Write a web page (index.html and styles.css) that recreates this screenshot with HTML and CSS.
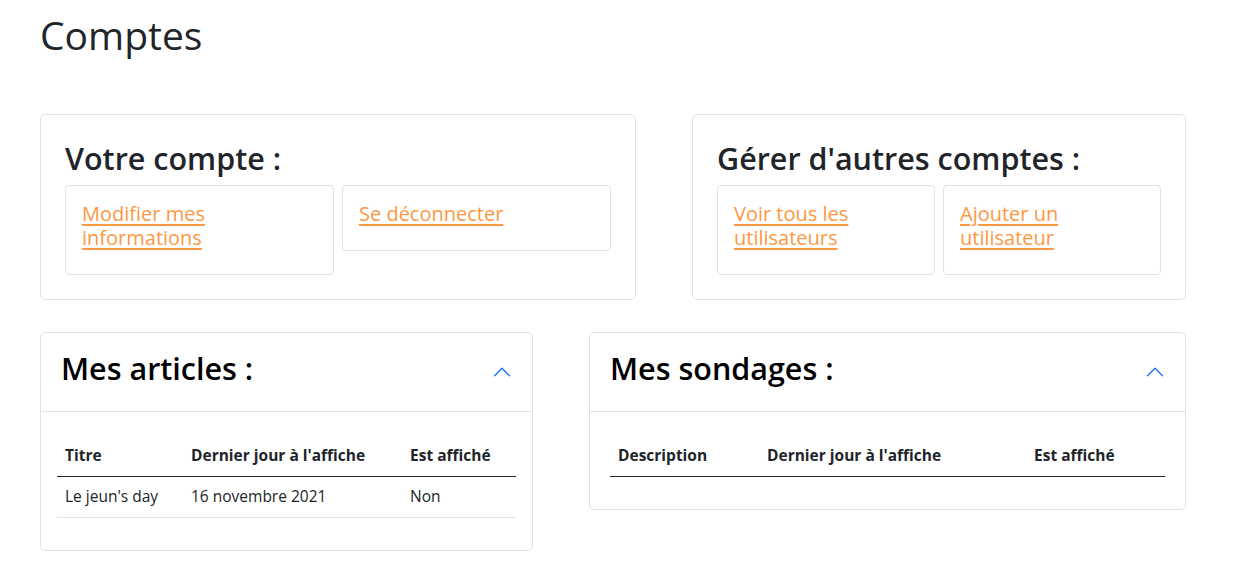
FILE: index.html
```html
<!DOCTYPE html>
<html lang="fr">
<head>
<meta charset="utf-8">
<title>Comptes</title>
<link rel="stylesheet" href="styles.css">
</head>
<body>
<main class="page">
  <h1 class="page-title">Comptes</h1>

  <section class="row row-top">
    <div class="card">
      <h2 class="card-title">Votre compte :</h2>
      <div class="link-grid">
        <div class="link-card"><h5 class="link-title"><a href="#">Modifier mes informations</a></h5></div>
        <div class="link-card"><h5 class="link-title"><a href="#">Se déconnecter</a></h5></div>
      </div>
    </div>
    <div class="card">
      <h2 class="card-title">Gérer d'autres comptes :</h2>
      <div class="link-grid">
        <div class="link-card"><h5 class="link-title"><a href="#">Voir tous les utilisateurs</a></h5></div>
        <div class="link-card"><h5 class="link-title"><a href="#">Ajouter un utilisateur</a></h5></div>
      </div>
    </div>
  </section>

  <section class="row row-bottom">
    <div class="accordion">
      <div class="acc-header">
        <h2 class="acc-title">Mes articles :</h2>
        <svg class="chevron" viewBox="0 0 16 16" width="20" height="20"><path fill="currentColor" fill-rule="evenodd" d="M1.646 11.354a.5.5 0 0 0 .708 0L8 5.707l5.646 5.647a.5.5 0 0 0 .708-.708l-6-6a.5.5 0 0 0-.708 0l-6 6a.5.5 0 0 0 0 .708z"/></svg>
      </div>
      <div class="acc-body acc-body-narrow">
        <table class="table table-articles">
          <thead>
            <tr><th class="c1">Titre</th><th class="c2">Dernier jour à l'affiche</th><th>Est affiché</th></tr>
          </thead>
          <tbody>
            <tr><td>Le jeun's day</td><td>16 novembre 2021</td><td>Non</td></tr>
          </tbody>
        </table>
      </div>
    </div>
    <div class="accordion">
      <div class="acc-header">
        <h2 class="acc-title">Mes sondages :</h2>
        <svg class="chevron" viewBox="0 0 16 16" width="20" height="20"><path fill="currentColor" fill-rule="evenodd" d="M1.646 11.354a.5.5 0 0 0 .708 0L8 5.707l5.646 5.647a.5.5 0 0 0 .708-.708l-6-6a.5.5 0 0 0-.708 0l-6 6a.5.5 0 0 0 0 .708z"/></svg>
      </div>
      <div class="acc-body">
        <table class="table table-sondages">
          <thead>
            <tr><th class="c1">Description</th><th class="c2">Dernier jour à l'affiche</th><th>Est affiché</th></tr>
          </thead>
          <tbody></tbody>
        </table>
      </div>
    </div>
  </section>
</main>
</body>
</html>
```

FILE: styles.css
```css
* { box-sizing: border-box; }

html, body {
  margin: 0;
  background: #fff;
}

body {
  font-family: "Open Sans", "Noto Sans", "DejaVu Sans", sans-serif;
  color: #212529;
  font-size: 16px;
  line-height: 1.5;
}

.page {
  width: 1146px;
  margin-left: 40px;
  padding-top: 11px;
}

.page-title {
  margin: 0 0 55px;
  font-size: 39px;
  line-height: 48px;
  font-weight: 400;
}

.row {
  display: grid;
  column-gap: 56px;
  align-items: start;
}

.row-top {
  grid-template-columns: 596px 494px;
  margin-bottom: 32px;
}

.row-bottom {
  grid-template-columns: 493px 597px;
}

.card {
  border: 1px solid #dee2e6;
  border-radius: 5px;
  padding: 24px;
  background: #fff;
}

.card-title {
  margin: 0 0 8px;
  font-size: 30.5px;
  line-height: 38px;
  font-weight: 600;
}

.link-grid {
  display: grid;
  grid-template-columns: 1fr 1fr;
  gap: 8px;
  align-items: start;
}

.link-card {
  border: 1px solid #dee2e6;
  border-radius: 4px;
  padding: 16px;
}

.link-title {
  margin: 0 0 8px;
  font-size: 20px;
  line-height: 24px;
  font-weight: 400;
  max-width: 150px;
}

.link-title a {
  color: #fd9843;
  text-decoration: underline;
  text-underline-offset: 3px;
}

.accordion {
  border: 1px solid #dee2e6;
  border-radius: 5px;
  background: #fff;
}

.acc-header {
  display: flex;
  align-items: center;
  justify-content: space-between;
  padding: 16px 20px;
  border-bottom: 1px solid #dee2e6;
}

.acc-title {
  margin: 0 0 8px;
  font-size: 30.5px;
  line-height: 38px;
  font-weight: 600;
  color: #000;
}

.chevron {
  display: block;
  color: #1a6ef0;
  flex: none;
}

.acc-body {
  padding: 24px 20px 16px;
}

.acc-body-narrow {
  padding-left: 16px;
  padding-right: 16px;
}

.table {
  width: 100%;
  border-collapse: collapse;
  margin-bottom: 16px;
  font-size: 15.5px;
}

.table th,
.table td {
  text-align: left;
  vertical-align: top;
  line-height: 24px;
  padding: 7px 8px 9px;
}

.table th {
  font-weight: 700;
  border-bottom: 1px solid #212529;
}

.table td {
  border-bottom: 1px solid #dee2e6;
}

.table-articles .c1 { width: 126px; }
.table-articles .c2 { width: 219px; }
.table-sondages .c1 { width: 149px; }
.table-sondages .c2 { width: 267px; }
```
